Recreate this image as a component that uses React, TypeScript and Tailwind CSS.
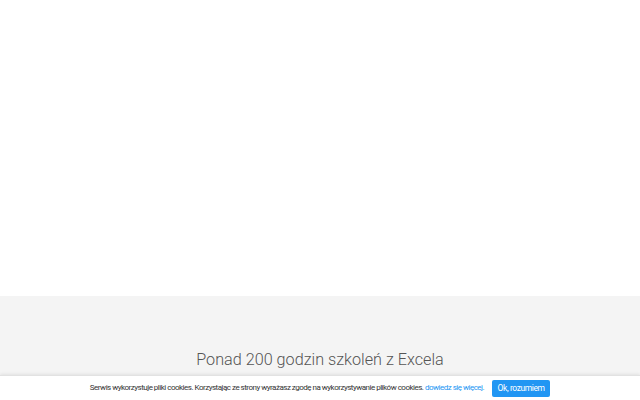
export default function App() {
  return (
    <div className="relative h-[400px] w-[640px] overflow-hidden bg-white" style={{ fontFamily: "Roboto, 'Liberation Sans', sans-serif" }}>
      <div className="h-[296px] bg-white" />
      <div className="flex h-[104px] flex-col items-center bg-[#f4f4f4] pt-[52px]">
        <h2 className="text-[16.2px] font-light leading-[24px] text-[#555555]">Ponad 200 godzin szkoleń z Excela</h2>
      </div>
      <div className="absolute bottom-0 left-0 right-0 flex h-[25px] items-center justify-center gap-[8px] border-t border-[#e2e2e2] bg-white shadow-[0_-1px_3px_rgba(0,0,0,0.08)]">
        <p className="text-[8px] font-normal tracking-[-0.5px] text-[#333333]">
          Serwis wykorzystuje pliki cookies. Korzystając ze strony wyrażasz zgodę na wykorzystywanie plików cookies.{" "}
          <a className="text-[#2196f3]">dowiedz się więcej.</a>
        </p>
        <button className="flex h-[17px] w-[58px] items-center justify-center rounded-[2px] bg-[#2196f3] text-[8.5px] font-normal tracking-[-0.4px] text-white">Ok, rozumiem</button>
      </div>
    </div>
  );
}
